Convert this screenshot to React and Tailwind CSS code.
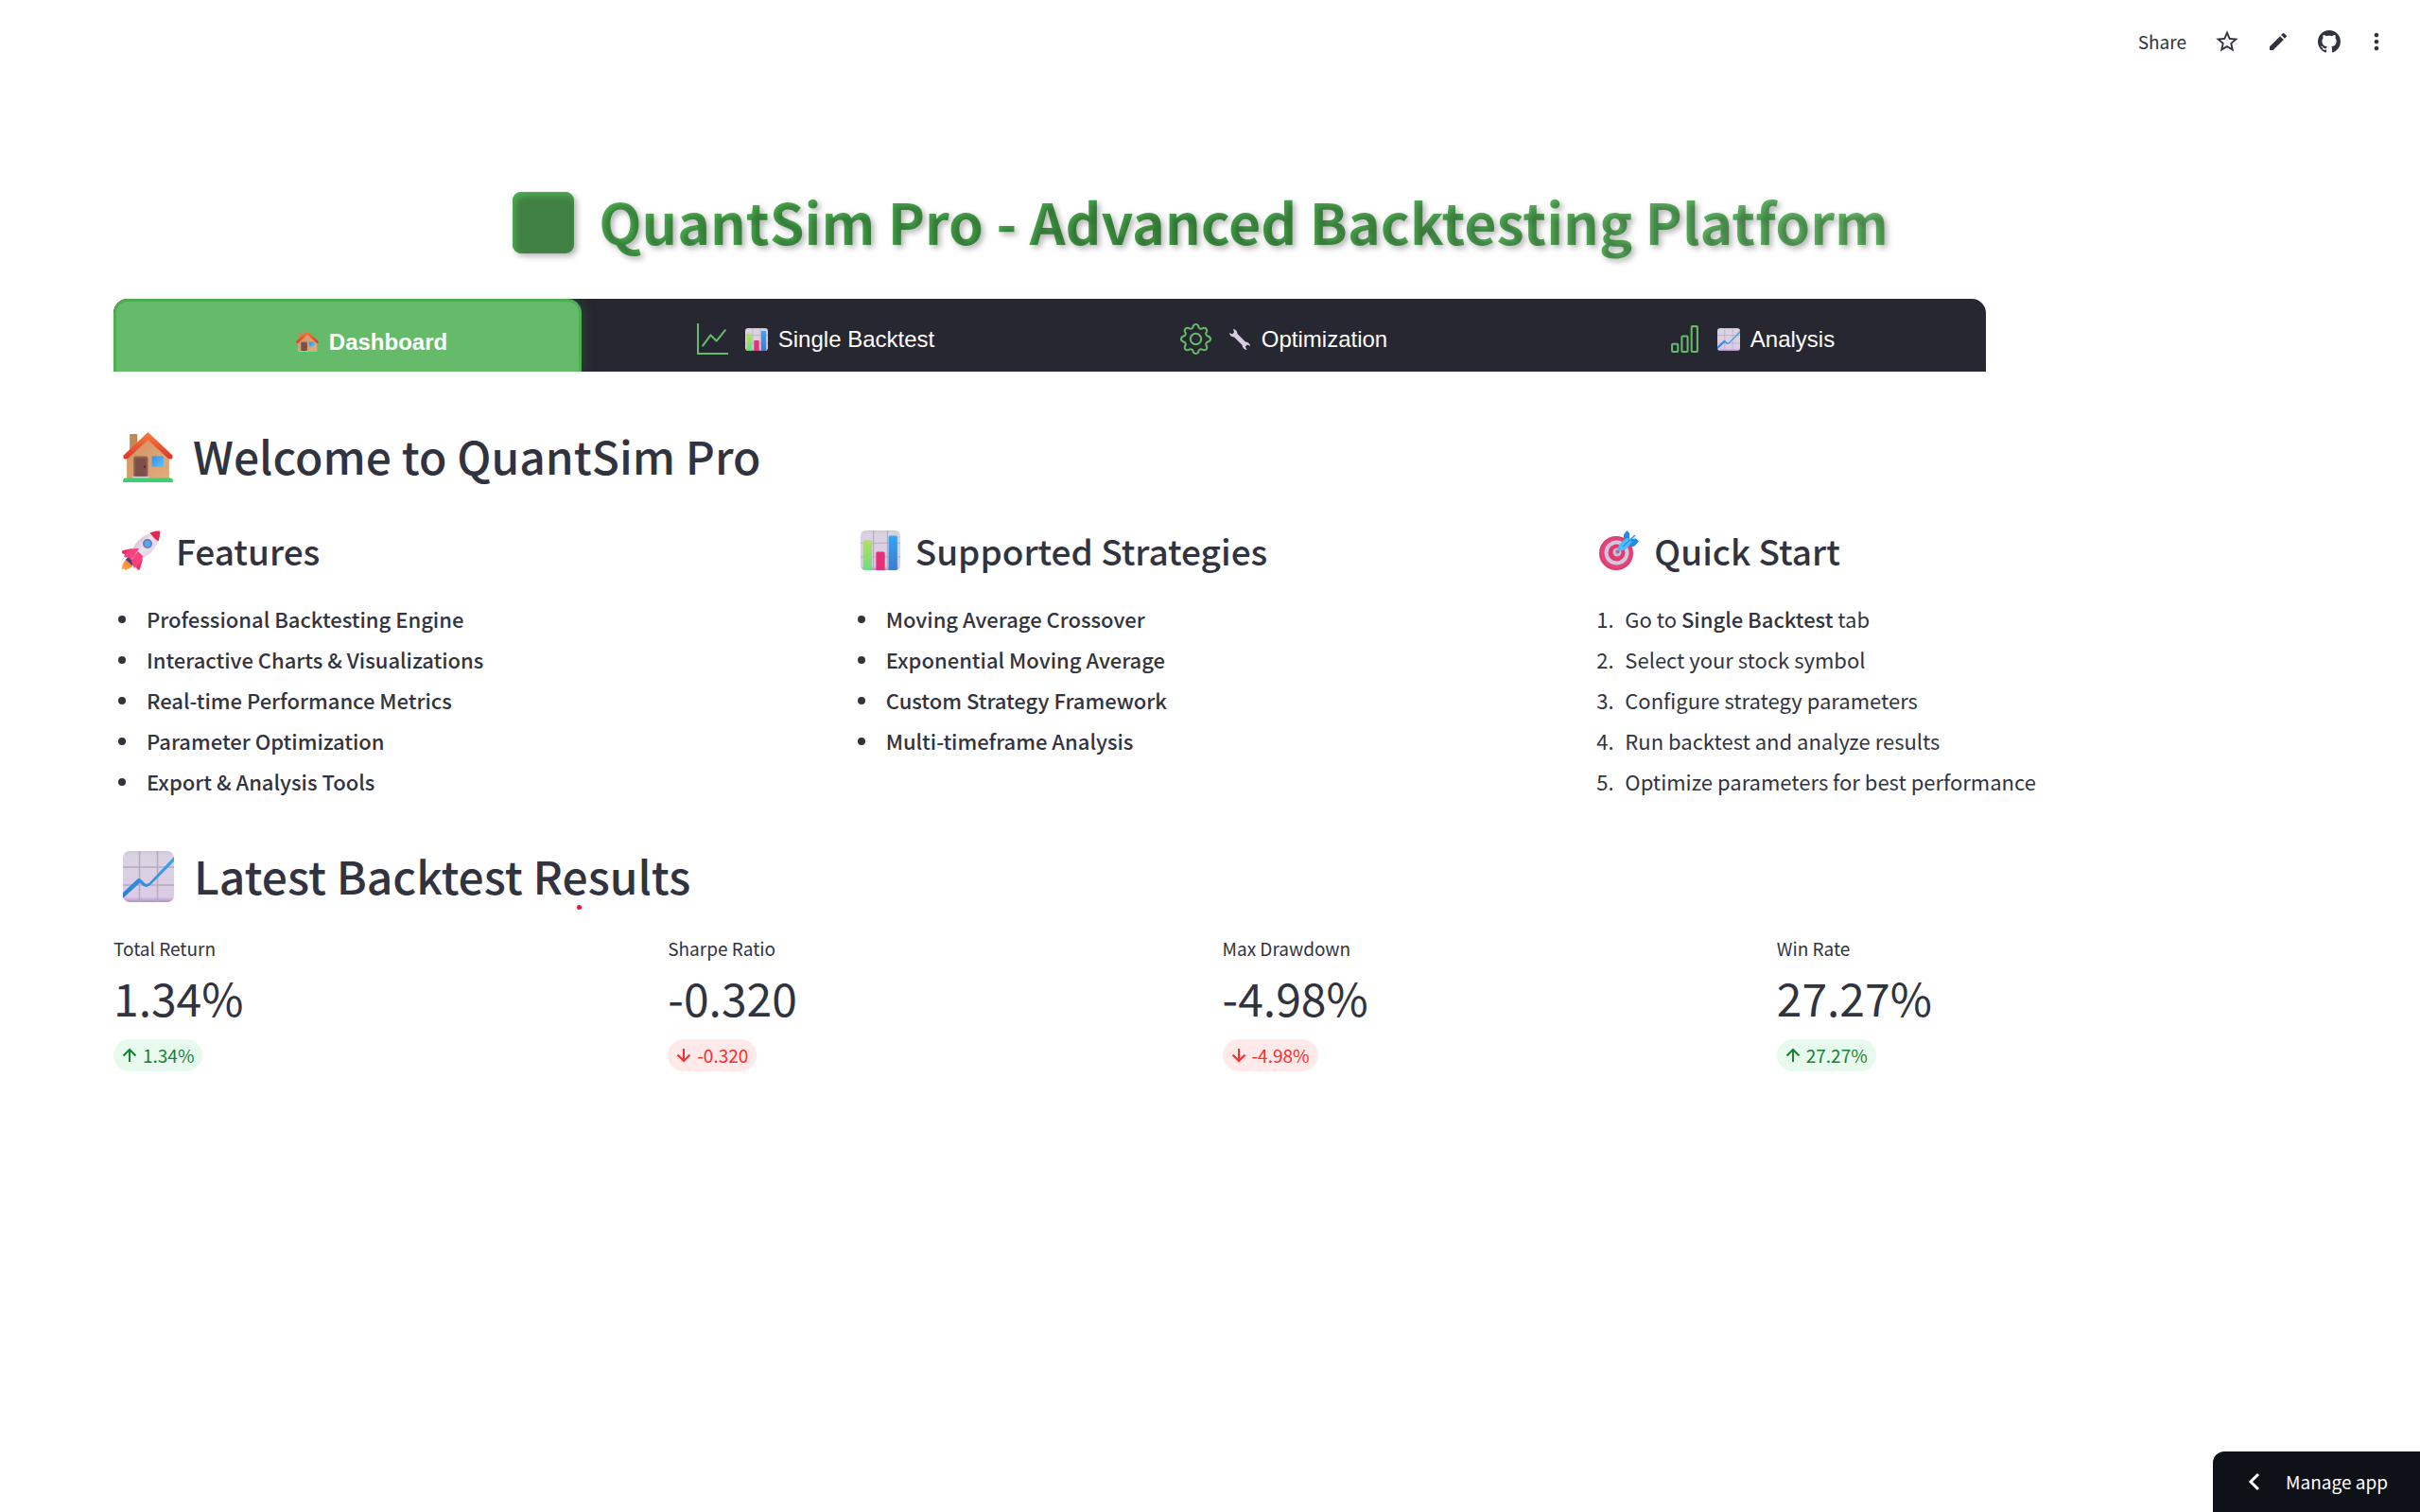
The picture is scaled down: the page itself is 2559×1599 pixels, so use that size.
import React from "react";
import { BsGraphUp, BsGear, BsBarChart, BsHouse } from "react-icons/bs";
import { MdStarBorder, MdEdit, MdMoreVert } from "react-icons/md";

function HouseEmoji({ className }) {
  return (
    <svg viewBox="0 0 52 52" className={className} aria-hidden="true">
      <defs>
        <linearGradient id="wall" x1="0" y1="0" x2="1" y2="1">
          <stop offset="0" stopColor="#cf925f" />
          <stop offset="1" stopColor="#e3ac7c" />
        </linearGradient>
        <linearGradient id="roof" x1="0" y1="0" x2="0" y2="1">
          <stop offset="0" stopColor="#ff7a3c" />
          <stop offset="1" stopColor="#d8382f" />
        </linearGradient>
        <linearGradient id="pane" x1="0" y1="0" x2="1" y2="1">
          <stop offset="0" stopColor="#2f8fe8" />
          <stop offset="1" stopColor="#5cc4fb" />
        </linearGradient>
      </defs>
      <rect x="7" y="2" width="8" height="22" rx="1" fill="#c08a55" />
      <path d="M4 25 L26 4 L48 25 V48 H4 Z" fill="url(#wall)" />
      <path d="M26 0 L51.400 24 Q52.500 28 49 28 Q47.500 28 46.500 27 L26 8 L5.500 27 Q4.500 28 3 28 Q-0.500 28 0.600 24 Z" fill="url(#roof)" />
      <rect x="11" y="25" width="15" height="22" rx="2.500" fill="#8d6055" />
      <rect x="13" y="27" width="11" height="20" rx="1.500" fill="#7c5048" />
      <circle cx="22.500" cy="36" r="1.200" fill="#4e2b29" />
      <rect x="30" y="25" width="12" height="11" rx="1" fill="url(#pane)" />
      <rect x="10" y="46" width="17" height="2" fill="#d8cfd8" />
      <path d="M2 47.500 H50 Q52 48 52 52 H0 Q0 48 2 47.500 Z" fill="#3ccf70" />
    </svg>
  );
}

function RocketEmoji({ className }) {
  return (
    <svg viewBox="0 0 42 42" className={className} aria-hidden="true">
      <defs>
        <linearGradient id="hull" x1="0.100" y1="0.200" x2="0.900" y2="0.800">
          <stop offset="0" stopColor="#c3b3cf" />
          <stop offset="0.500" stopColor="#ece3f0" />
          <stop offset="1" stopColor="#dcc8e4" />
        </linearGradient>
        <linearGradient id="flame" x1="1" y1="0" x2="0" y2="1">
          <stop offset="0" stopColor="#f0672f" />
          <stop offset="1" stopColor="#ffb24a" />
        </linearGradient>
      </defs>
      <path d="M9 28 Q1 32 0.500 41.500 L3 40.500 L4.500 42 L11 39 Q14 36 13 31 Z" fill="url(#flame)" />
      <path d="M12 19 L2 21 Q0.500 22 1 24 L9 28 Z" fill="#ee2f63" />
      <path d="M23 30 L20 41 Q18 43 16.500 40 L13 32 Z" fill="#ee2f63" />
      <path d="M9 26 L16 32 L12 37 L5 31 Z" fill="#4b3f7c" />
      <path d="M41 1 Q28 1 18 11 Q12 18 9 28 L14 33 Q24 30 31 24 Q41 14 41 1 Z" fill="url(#hull)" />
      <path d="M41 1 Q42 0 36 0.700 L30.500 2.500 Q34 8 39.500 11.500 Q41.500 6 41 1 Z" fill="#e72350" />
      <path d="M3 28 Q5 18 19 19 Q15 25 10 32 L9 29 Z M18 22 Q12 28 11 33 L14 40 Q22 35 23 27 Z" fill="#f9417c" />
      <circle cx="28" cy="14" r="5" fill="#7b6d95" />
      <circle cx="28" cy="14" r="3.500" fill="#4faaf4" />
    </svg>
  );
}

function Sheet() {
  return (
    <>
      <defs>
        <linearGradient id="sheet" x1="0" y1="0" x2="0" y2="1">
          <stop offset="0" stopColor="#cfc8d4" />
          <stop offset="0.100" stopColor="#dad3e2" />
          <stop offset="0.900" stopColor="#dccbe6" />
          <stop offset="1" stopColor="#b08cc9" />
        </linearGradient>
        <linearGradient id="trend" x1="0" y1="1" x2="1" y2="0">
          <stop offset="0" stopColor="#2f7fd0" />
          <stop offset="1" stopColor="#38a5ee" />
        </linearGradient>
        <linearGradient id="barLime" x1="0" y1="0" x2="0" y2="1">
          <stop offset="0" stopColor="#b2e25c" />
          <stop offset="1" stopColor="#6cdc86" />
        </linearGradient>
        <linearGradient id="barBlue" x1="0" y1="0" x2="0" y2="1">
          <stop offset="0" stopColor="#35a6f5" />
          <stop offset="1" stopColor="#3f7bcb" />
        </linearGradient>
      </defs>
      <rect width="54" height="54" rx="7" fill="url(#sheet)" />
      <path d="M17.500 0 V54 M36.500 0 V54 M0 17 H54 M0 36 H54" stroke="#b5abbd" strokeWidth="1.500" />
    </>
  );
}

function TrendEmoji({ className }) {
  return (
    <svg viewBox="0 0 54 54" className={className} aria-hidden="true">
      <Sheet />
      <path d="M0 44 L15 30 Q17 28 19.500 30.500 L22.500 33.500 Q25 36 28 33.500 L54 6 V11 L30 35 Q25.500 40 21 36.500 L18 33.500 L0 50 Z" fill="url(#trend)" />
    </svg>
  );
}

function BarsEmoji({ className }) {
  return (
    <svg viewBox="0 0 54 54" className={className} aria-hidden="true">
      <Sheet />
      <path d="M3.500 15 Q3.500 13 5.500 13 H13.500 Q15.500 13 15.500 15 V54 H7 Q4.500 54 3.500 52 Z" fill="url(#barLime)" />
      <path d="M21 31 Q21 29 23 29 H31 Q33 29 33 31 V54 H21 Z" fill="#e5317a" />
      <path d="M38 9 Q38 7 40 7 H48 Q50 7 50 9 V52 Q49 54 47 54 H38 Z" fill="url(#barBlue)" />
    </svg>
  );
}

function TargetEmoji({ className }) {
  return (
    <svg viewBox="0 0 42 42" className={className} aria-hidden="true">
      <circle cx="18" cy="24" r="18" fill="#de3a68" />
      <circle cx="18" cy="23.500" r="16.500" fill="#e2457b" />
      <circle cx="18.500" cy="23.500" r="13" fill="#d3c6de" />
      <circle cx="18.500" cy="23.500" r="9" fill="#e23a6e" />
      <circle cx="19" cy="23" r="4.500" fill="#cdbdd8" />
      <circle cx="19.500" cy="22.500" r="2" fill="#8e7b99" />
      <path d="M19 23 L27 14" stroke="#8e7b99" strokeWidth="1.500" />
      <path d="M26 8 Q25 5 27 3 L29.500 0 L32 3 V9 L39 8.500 L42 11.500 L38 16 Q36 18 32 16.500 Z" fill="#2389ea" />
      <path d="M20 21 Q19 16 24 12 L30 7.500 L34.500 12 L30 18 Q26 22.500 20 21 Z" fill="#4fbdf6" />
      <path d="M25 17 L38 5" stroke="#2a92e8" strokeWidth="1.500" />
    </svg>
  );
}

function WrenchEmoji({ className }) {
  return (
    <svg viewBox="0 0 24 24" className={className} aria-hidden="true">
      <path d="M5 1 Q9 1.500 9.500 6 L18 14.500 Q22.500 15 23 19 L20 17.500 L17.800 19.500 L19.500 23 Q15 22.500 14.600 18 L6 9.500 Q1.500 9 1 5 L4 6.500 L6 4.500 Z" fill="#d9cde3" />
    </svg>
  );
}

function GithubMark({ className }) {
  return (
    <svg viewBox="0 0 16 16" className={className} fill="currentColor" aria-hidden="true">
      <path d="M8 0C3.580 0 0 3.580 0 8c0 3.540 2.290 6.530 5.470 7.590.4.070.55-.17.55-.38 0-.19-.01-.82-.01-1.490-2.010.37-2.530-.49-2.690-.94-.09-.23-.48-.94-.82-1.130-.28-.15-.68-.52-.01-.53.630-.01 1.080.58 1.230.82.72 1.210 1.870.87 2.330.66.070-.52.280-.87.510-1.070-1.780-.2-3.640-.89-3.640-3.950 0-.87.310-1.590.82-2.150-.08-.2-.36-1.020.080-2.120 0 0 .67-.21 2.200.82.640-.18 1.320-.27 2-.27s1.360.09 2 .27c1.530-1.040 2.200-.82 2.200-.82.440 1.100.160 1.920.080 2.120.510.56.82 1.270.82 2.150 0 3.070-1.870 3.750-3.650 3.950.290.25.540.73.540 1.480 0 1.070-.01 1.930-.01 2.200 0 .21.150.46.550.38A8.010 8.010 0 0 0 16 8c0-4.420-3.580-8-8-8z" />
    </svg>
  );
}

const toolbar = [
  { label: "Favorite", icon: <MdStarBorder className="size-7" /> },
  { label: "Edit", icon: <MdEdit className="size-6" /> },
  { label: "View source on GitHub", icon: <GithubMark className="size-6" /> },
];

const tabs = [
  { label: "Single Backtest", icon: BsGraphUp, emoji: <BarsEmoji className="size-6" /> },
  { label: "Optimization", icon: BsGear, emoji: <WrenchEmoji className="size-6" /> },
  { label: "Analysis", icon: BsBarChart, emoji: <TrendEmoji className="size-6" /> },
];

const features = [
  "Professional Backtesting Engine",
  "Interactive Charts & Visualizations",
  "Real-time Performance Metrics",
  "Parameter Optimization",
  "Export & Analysis Tools",
];

const strategies = [
  "Moving Average Crossover",
  "Exponential Moving Average",
  "Custom Strategy Framework",
  "Multi-timeframe Analysis",
];

const steps = [
  <>Go to <strong className="font-medium">Single Backtest</strong> tab</>,
  "Select your stock symbol",
  "Configure strategy parameters",
  "Run backtest and analyze results",
  "Optimize parameters for best performance",
];

const metrics = [
  { label: "Total Return", value: "1.34%", up: true },
  { label: "Sharpe Ratio", value: "-0.320", up: false },
  { label: "Max Drawdown", value: "-4.98%", up: false },
  { label: "Win Rate", value: "27.27%", up: true },
];

function SectionTitle({ emoji, children }) {
  return (
    <h2 className="flex items-center gap-[21px] pl-[10px] text-[48px] leading-[60px] font-medium">
      {emoji}
      <span className="pb-1">{children}</span>
    </h2>
  );
}

function ColumnTitle({ emoji, children }) {
  return (
    <h3 className="flex items-center gap-4 pl-2 text-[37px] leading-[50px] font-medium">
      {emoji}
      <span>{children}</span>
    </h3>
  );
}

function BulletList({ items }) {
  return (
    <ul className="mt-7 flex flex-col gap-[5px] text-[22px] leading-[38px] font-medium">
      {items.map((item) => (
        <li key={item} className="flex items-center gap-[22px] pl-[5px]">
          <span className="mt-0.5 size-2 rounded-full bg-[#31333f]" />
          {item}
        </li>
      ))}
    </ul>
  );
}

function Arrow({ up }) {
  return (
    <svg viewBox="0 0 16 16" className={up ? "size-4" : "size-4 rotate-180"} fill="none" stroke="currentColor" strokeWidth="2" aria-hidden="true">
      <path d="M8 15 V2 M1.500 8.500 L8 2 L14.500 8.500" />
    </svg>
  );
}

function Metric({ label, value, up }) {
  return (
    <div className="flex flex-col items-start">
      <div className="text-[19px] leading-8">{label}</div>
      <div className="text-[48px] leading-[70px]">{value}</div>
      <div
        className={
          up
            ? "mt-[10px] flex h-[34px] items-center gap-1.5 rounded-full bg-[#e8f9ee] px-[9px] text-[19px] text-[#158237]"
            : "mt-[10px] flex h-[34px] items-center gap-1.5 rounded-full bg-[#ffe9e9] px-[9px] text-[19px] text-[#ff2b2b]"
        }
      >
        <Arrow up={up} />
        {value}
      </div>
    </div>
  );
}

export default function App() {
  return (
    <div className="min-h-screen bg-white font-['Noto_Sans_CJK_SC','Noto_Sans',sans-serif] text-[#31333f]">
      <header className="flex h-[88px] items-center justify-end pr-[30px]">
        <button className="mr-[23px] text-[19px] leading-7">Share</button>
        {toolbar.map((t) => (
          <button key={t.label} aria-label={t.label} className="mr-[14px] flex size-10 items-center justify-center">
            {t.icon}
          </button>
        ))}
        <button aria-label="More options" className="flex size-8 items-center justify-center">
          <MdMoreVert className="size-7" />
        </button>
      </header>

      <main className="pr-[118px] pl-[120px]">
        <h1 className="flex h-[228px] items-center justify-center gap-[26px] pt-[66px] pr-[22px] text-[59px] leading-[80px] font-bold">
          <span className="size-[65px] rounded-[9px] bg-[#408043] shadow-[inset_3px_4px_6px_#4caf50,3px_3px_6px_rgba(0,0,0,0.3)]" />
          <span className="bg-linear-to-r from-[#4caf50] via-[#43a047] via-45% to-[#66bb6a] bg-clip-text pb-0.5 text-transparent [text-shadow:3px_3px_6px_rgba(0,0,0,0.3)]">
            QuantSim Pro - Advanced Backtesting Platform
          </span>
        </h1>

        <nav className="mr-[341px] grid h-[77px] grid-cols-4 overflow-hidden rounded-t-[15px] bg-[#262730] font-['Liberation_Sans',Arial,sans-serif] text-[24px] text-white">
          <button className="flex items-center justify-center rounded-t-[15px] border-x-[3px] border-t-[3px] border-[#4caf50] bg-[#66bb6a] pt-3 font-bold shadow-[0_0_15px_rgba(76,175,80,0.3)]">
            <BsHouse className="mr-[18px] size-[33px] text-[#66bb6a]" />
            <HouseEmoji className="mr-[11px] size-6" />
            Dashboard
          </button>
          {tabs.map(({ label, icon: Icon, emoji }) => (
            <button key={label} className="flex items-center justify-center pt-2">
              <Icon className="mr-[18px] size-[33px] text-[#66bb6a]" />
              <span className="mr-[11px]">{emoji}</span>
              {label}
            </button>
          ))}
        </nav>

        <section className="pt-[58px]">
          <SectionTitle emoji={<HouseEmoji className="size-[53px]" />}>Welcome to QuantSim Pro</SectionTitle>
          <div className="mt-[42px] grid grid-cols-3 gap-6">
            <div>
              <ColumnTitle emoji={<RocketEmoji className="size-[42px]" />}>Features</ColumnTitle>
              <BulletList items={features} />
            </div>
            <div>
              <ColumnTitle emoji={<BarsEmoji className="size-[42px]" />}>Supported Strategies</ColumnTitle>
              <BulletList items={strategies} />
            </div>
            <div>
              <ColumnTitle emoji={<TargetEmoji className="size-[42px]" />}>Quick Start</ColumnTitle>
              <ol className="mt-7 flex flex-col gap-[5px] text-[22px] leading-[38px]">
                {steps.map((step, i) => (
                  <li key={i} className="flex pl-[5px]">
                    <span className="w-[30px] shrink-0">{i + 1}.</span>
                    <span>{step}</span>
                  </li>
                ))}
              </ol>
            </div>
          </div>
        </section>

        <section className="relative pt-[50px]">
          <SectionTitle emoji={<TrendEmoji className="size-[54px]" />}>Latest Backtest Results</SectionTitle>
          <span className="absolute top-[112px] left-[490px] size-[5px] rounded-full bg-[#ee1133]" />
          <div className="mt-7 grid grid-cols-4 gap-6">
            {metrics.map((m) => (
              <Metric key={m.label} {...m} />
            ))}
          </div>
        </section>
      </main>

      <button className="fixed right-0 bottom-0 flex h-16 items-center gap-[26px] rounded-tl-xl bg-[#0e1117] pr-[34px] pl-[35px] text-[19px] text-white">
        <svg viewBox="0 0 16 20" className="h-5 w-4" fill="none" stroke="currentColor" strokeWidth="3" aria-hidden="true">
          <path d="M13 2 L5 10 L13 18" />
        </svg>
        Manage app
      </button>
    </div>
  );
}
